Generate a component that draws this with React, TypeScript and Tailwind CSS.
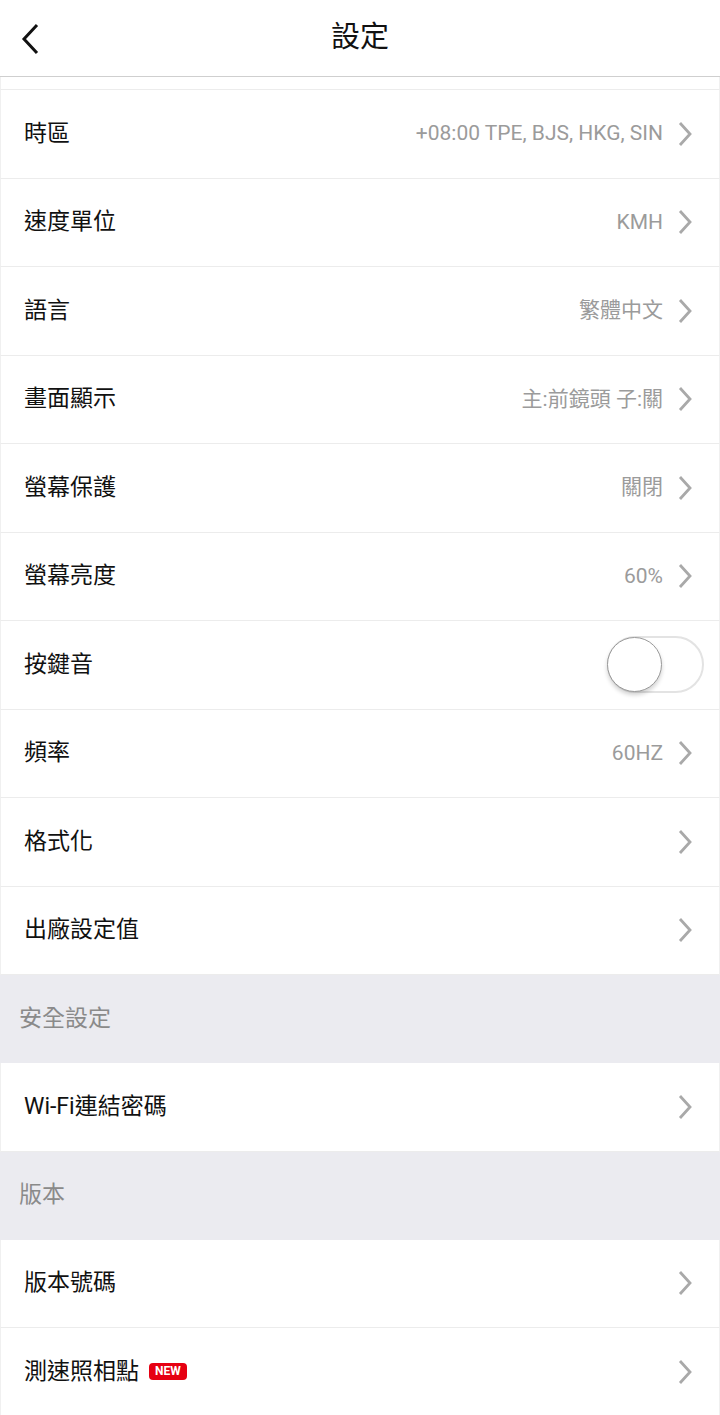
import { ReactNode } from "react";

type Row = {
  label: string;
  value?: string;
  toggle?: boolean;
  badge?: boolean;
};

const general: Row[] = [
  { label: "時區", value: "+08:00 TPE, BJS, HKG, SIN" },
  { label: "速度單位", value: "KMH" },
  { label: "語言", value: "繁體中文" },
  { label: "畫面顯示", value: "主:前鏡頭 子:關" },
  { label: "螢幕保護", value: "關閉" },
  { label: "螢幕亮度", value: "60%" },
  { label: "按鍵音", toggle: true },
  { label: "頻率", value: "60HZ" },
  { label: "格式化" },
  { label: "出廠設定值" },
];

const Chevron = () => (
  <svg width="16" height="26" viewBox="0 0 16 26" className="ml-[14px] mr-[26px] shrink-0">
    <path d="M3 2 L13 13 L3 24" fill="none" stroke="#a9a9a9" strokeWidth="2.8" />
  </svg>
);

const Toggle = () => (
  <div className="relative w-[97px] h-[57px] mr-[15px]">
    <div className="absolute inset-0 rounded-full border-2 border-[#e3e3e3] bg-white" />
    <div className="absolute left-0 top-[1px] w-[55px] h-[55px] rounded-full bg-white border border-[#9a9a9a] shadow-[0_3px_4px_rgba(0,0,0,0.18)]" />
  </div>
);

const SettingRow = ({ row }: { row: Row }) => (
  <div className="flex items-center h-[88.5px] border-b border-[#ececec] border-x border-x-[#f0f0f0] bg-white">
    <span className="pl-[23px] text-[23px] text-[#111]">{row.label}</span>
    {row.badge && (
      <span className="ml-[10px] px-[6px] h-[17px] leading-[17px] rounded-[4px] bg-[#e60012] text-white text-[12px] font-bold">
        NEW
      </span>
    )}
    <div className="flex-1" />
    {row.toggle ? (
      <Toggle />
    ) : (
      <>
        {row.value && <span className="text-[21px] text-[#9b9b9b]">{row.value}</span>}
        <Chevron />
      </>
    )}
  </div>
);

const Section = ({ children }: { children: ReactNode }) => (
  <div className="flex items-center h-[88px] bg-[#ebebf0] pl-[19px] text-[23px] text-[#8a8a8a]">{children}</div>
);

export default function App() {
  return (
    <div
      className="w-[720px] h-[1415px] bg-white overflow-hidden"
      style={{ fontFamily: "Roboto, 'Noto Sans CJK TC', sans-serif" }}
    >
      <header className="relative flex items-center justify-center h-[77px] border-b border-[#cfcfcf]">
        <svg width="24" height="32" viewBox="0 0 24 32" className="absolute left-[19px] top-[23px]">
          <path d="M18 2 L5 16 L18 30" fill="none" stroke="#111" strokeWidth="3" />
        </svg>
        <h1 className="text-[29px] text-[#111]">設定</h1>
      </header>
      <div className="h-[13px] border-b border-[#ececec] border-x border-x-[#f0f0f0]" />
      {general.map((r) => (
        <SettingRow key={r.label} row={r} />
      ))}
      <Section>安全設定</Section>
      <SettingRow row={{ label: "Wi-Fi連結密碼" }} />
      <Section>版本</Section>
      <SettingRow row={{ label: "版本號碼" }} />
      <SettingRow row={{ label: "測速照相點", badge: true }} />
    </div>
  );
}
